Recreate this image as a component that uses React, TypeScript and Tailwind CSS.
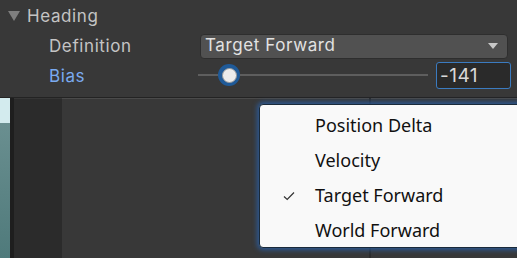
import React from "react";

const menuItems = ["Position Delta", "Velocity", "Target Forward", "World Forward"];

function Check() {
  return (
    <svg width="12" height="10" viewBox="0 0 12 10" fill="none">
      <path d="M1 5.5 L4.2 8.5 L11 1.5" stroke="#333" strokeWidth="1.2" />
    </svg>
  );
}

export default function App() {
  return (
    <div className="relative w-[517px] h-[258px] overflow-hidden bg-[#383838] font-['Inter',sans-serif]">
      {/* inspector */}
      <div className="h-[97px] bg-[#383838] text-[#c4c4c4] text-[17px]">
        <div className="flex items-center h-[30px] pl-[8px] gap-[7px]">
          <svg width="12" height="10" viewBox="0 0 12 10" className="mt-[1px]">
            <path d="M0 0 H12 L6 10 Z" fill="#7e7e7e" />
          </svg>
          <span className="pt-[4px] tracking-[0.6px]">Heading</span>
        </div>
        <div className="flex items-center h-[30px] pl-[49px]">
          <span className="w-[151px] pt-[4px] tracking-[0.6px]">Definition</span>
          <div className="flex items-center justify-between w-[308px] h-[25px] mt-[2px] rounded-[4px] bg-[#515151] border border-[#2e2e2e] pl-[4px] pr-[9px] text-[#e2e2e2]">
            <span className="tracking-[0.6px]">Target Forward</span>
            <svg width="10" height="6" viewBox="0 0 10 6">
              <path d="M0 0 H10 L5 6 Z" fill="#c8c8c8" />
            </svg>
          </div>
        </div>
        <div className="flex items-center h-[30px] pl-[49px]">
          <span className="w-[149px] pt-[4px] text-[#7aaaf0] tracking-[0.6px]">Bias</span>
          <div className="relative flex items-center w-[230px] h-[26px]">
            <div className="w-full h-[2px] bg-[#5e5e5e]" />
            <div className="absolute left-[20px] top-[2px] w-[22px] h-[22px] rounded-full bg-[#1f5a98] flex items-center justify-center">
              <div className="w-[15px] h-[15px] rounded-full bg-[#ebebeb] border border-[#9a9a9a]" />
            </div>
          </div>
          <div className="ml-[8px] w-[75px] h-[27px] rounded-[3px] bg-[#2a2a2a] border border-[#3b7bc0] pl-[3px] pt-[2px] flex items-center text-[#d8d8d8] text-[19px] tracking-[0.5px]">
            -141
          </div>
        </div>
      </div>
      <div className="h-[1px] bg-[#232323]" />

      {/* scene */}
      <div className="flex h-[160px]">
        <div className="w-[10px] flex flex-col">
          <div className="h-[25px] bg-[#d3ebee]" />
          <div className="flex-1 bg-gradient-to-b from-[#6a8f90] to-[#4f7a7b]" />
        </div>
        <div className="w-[4px] bg-[#1e1e1e]" />
        <div className="w-[48px] bg-[#2b2b2b] border-t border-[#353535]" />
        <div className="w-[307px] bg-[#383838] border-t border-[#4a4a4a]" />
        <div className="w-[2px] bg-[#2c2c2c]" />
        <div className="flex-1 bg-[#383838] border-t border-[#4a4a4a]" />
      </div>

      {/* popup menu */}
      <div className="absolute left-[259px] top-[104px] w-[270px] h-[144px] rounded-[4px] bg-[#f9f9f9] border border-[#1a2a3a] shadow-[0_0_5px_2px_rgba(40,100,180,0.75)] pt-[3px] font-['Noto_Sans',sans-serif] text-[18px] text-[#111]">
        {menuItems.map((item) => (
          <div key={item} className="flex items-center h-[35px]">
            <div className="w-[55px] pl-[23px] flex items-center">
              {item === "Target Forward" && <Check />}
            </div>
            <span>{item}</span>
          </div>
        ))}
      </div>
    </div>
  );
}
